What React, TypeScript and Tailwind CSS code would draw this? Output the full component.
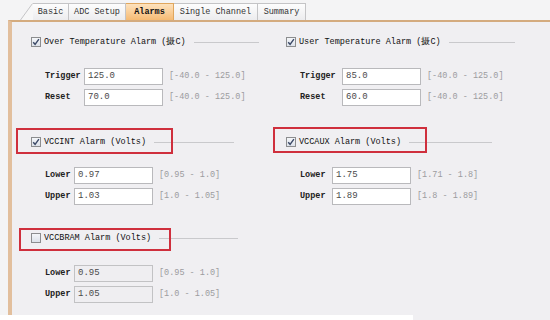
import React from "react";

const mono = "font-['Liberation_Mono',monospace]";

const tabs = [
  { name: "Basic", w: "w-[36px]" },
  { name: "ADC Setup", w: "w-[57px]" },
  { name: "Alarms", w: "w-[48px]", active: true },
  { name: "Single Channel", w: "w-[84px]" },
  { name: "Summary", w: "w-[48px]" },
];

const CheckBox: React.FC<{ checked: boolean }> = ({ checked }) => (
  <div className="w-[10px] h-[10px] border border-[#8c8d8f] bg-gradient-to-b from-[#f4f6f9] to-[#dde2ea] flex items-center justify-center shrink-0">
    {checked && (
      <svg width="8" height="8" viewBox="0 0 8 8">
        <path d="M1.2 4.2 L3.1 6.3 L6.9 1.2" fill="none" stroke="#3a4866" strokeWidth="1.4" />
      </svg>
    )}
  </div>
);

type Field = { label: string; value: string; range: string };

const Section: React.FC<{
  title: string;
  checked: boolean;
  lineW: string;
  labelW: string;
  fields: Field[];
  gapTop: string;
  boxed?: string;
  disabled?: boolean;
}> = ({ title, checked, lineW, labelW, fields, gapTop, boxed, disabled }) => (
  <div className="w-[255px] flex flex-col">
    <div className="relative flex items-center h-[12px]">
      <CheckBox checked={checked} />
      <span className={`${mono} ml-[3px] text-[8.5px] leading-none text-[#111] whitespace-nowrap`}>{title}</span>
      <div className={`ml-[8px] h-px bg-[#c9c9cc] ${lineW}`} />
      {boxed && <div className={`absolute border-2 border-[#cf2f3d] ${boxed}`} />}
    </div>
    <div className={`flex flex-col gap-[4px] pl-[14px] ${gapTop}`}>
      {fields.map((f) => (
        <div key={f.label} className="flex items-center h-[17px]">
          <span className={`${mono} ${labelW} text-[8.5px] font-bold text-[#222]`}>{f.label}</span>
          <div
            className={`w-[79px] h-[17px] border flex items-center pl-[3px] ${
              disabled ? "bg-[#efeef1] border-[#c2c2c4]" : "bg-white border-[#b9b9bc]"
            }`}
          >
            <span className={`${mono} text-[9px] text-[#4a4a4a]`}>{f.value}</span>
          </div>
          <span className={`${mono} ml-[6px] text-[8.5px] text-[#9c9c9f] whitespace-nowrap`}>{f.range}</span>
        </div>
      ))}
    </div>
  </div>
);

export default function App() {
  return (
    <div className="w-[550px] h-[320px] bg-[#f4f4f5] flex flex-col overflow-hidden">
      {/* tab strip */}
      <div className="h-[20px] flex items-end pl-[20px]">
        <svg width="13" height="17" viewBox="0 0 13 17" className="shrink-0">
          <path d="M0 17 L12 0 L13 0 L13 17 Z" fill="#f7f7f7" />
          <path d="M0.5 17 L12.5 0.5" stroke="#c4c4c6" strokeWidth="1" fill="none" />
        </svg>
        {tabs.map((t) => (
          <div
            key={t.name}
            className={`${t.w} h-[17px] flex items-center justify-center border-t border-r border-[#c4c4c6] ${
              t.active
                ? "bg-gradient-to-b from-[#fde2bd] to-[#f6bb73] border-[#e0a75e]"
                : "bg-gradient-to-b from-[#fdfdfd] to-[#ececee]"
            }`}
          >
            <span
              className={`${mono} text-[8.5px] whitespace-nowrap ${
                t.active ? "font-bold text-[#111]" : "text-[#333]"
              }`}
            >
              {t.name}
            </span>
          </div>
        ))}
      </div>

      {/* panel */}
      <div className="ml-[8px] h-[295px] border-t-2 border-l-4 border-t-[#d4ab7f] border-l-[#e2bf9d] bg-[#f0eff2] pl-[19px] pt-[14px] flex flex-col">
        <div className="flex">
          <Section
            title="Over Temperature Alarm (摄C)"
            checked
            lineW="w-[65px]"
            labelW="w-[39px]"
            gapTop="mt-[20px]"
            fields={[
              { label: "Trigger", value: "125.0", range: "[-40.0 - 125.0]" },
              { label: "Reset", value: "70.0", range: "[-40.0 - 125.0]" },
            ]}
          />
          <Section
            title="User Temperature Alarm (摄C)"
            checked
            lineW="w-[66px]"
            labelW="w-[42px]"
            gapTop="mt-[20px]"
            fields={[
              { label: "Trigger", value: "85.0", range: "[-40.0 - 125.0]" },
              { label: "Reset", value: "60.0", range: "[-40.0 - 125.0]" },
            ]}
          />
        </div>

        <div className="flex mt-[30px]">
          <Section
            title="VCCINT Alarm (Volts)"
            checked
            lineW="w-[80px]"
            labelW="w-[29px]"
            gapTop="mt-[19px]"
            boxed="left-[-15px] top-[-8px] w-[157px] h-[26px]"
            fields={[
              { label: "Lower", value: "0.97", range: "[0.95 - 1.0]" },
              { label: "Upper", value: "1.03", range: "[1.0 - 1.05]" },
            ]}
          />
          <Section
            title="VCCAUX Alarm (Volts)"
            checked
            lineW="w-[83px]"
            labelW="w-[32px]"
            gapTop="mt-[19px]"
            boxed="left-[-13px] top-[-9px] w-[154px] h-[26px]"
            fields={[
              { label: "Lower", value: "1.75", range: "[1.71 - 1.8]" },
              { label: "Upper", value: "1.89", range: "[1.8 - 1.89]" },
            ]}
          />
        </div>

        <div className="flex mt-[27px]">
          <Section
            title="VCCBRAM Alarm (Volts)"
            checked={false}
            lineW="w-[79px]"
            labelW="w-[29px]"
            gapTop="mt-[21px]"
            boxed="left-[-12px] top-[-4px] w-[152px] h-[23px]"
            disabled
            fields={[
              { label: "Lower", value: "0.95", range: "[0.95 - 1.0]" },
              { label: "Upper", value: "1.05", range: "[1.0 - 1.05]" },
            ]}
          />
        </div>
      </div>
      <div className="flex h-[5px]">
        <div className="w-[413px] bg-white" />
        <div className="flex-1 bg-[#f0eff2]" />
      </div>
    </div>
  );
}
